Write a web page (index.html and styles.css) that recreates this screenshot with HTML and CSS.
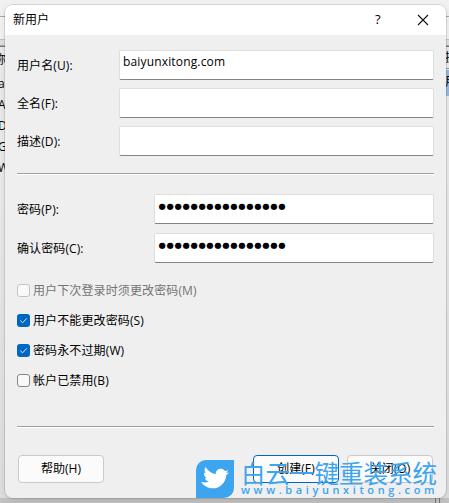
FILE: index.html
```html
<!DOCTYPE html>
<html lang="zh-CN">
<head>
<meta charset="utf-8">
<title>新用户</title>
<link rel="stylesheet" href="styles.css">
</head>
<body>
<div class="desktop">
  <div class="toolbar"></div>
  <div class="toolbar-edge"></div>
  <div class="panes">
    <div class="list"><div>称</div><div>ad</div><div>Ac</div><div>De</div><div>Gu</div><div>W</div></div>
    <div class="actions"><div class="actions-head">操</div><div class="actions-item">用</div></div>
  </div>
  <div class="pane-foot"><span></span></div>
</div>
<main class="dialog">
  <header class="titlebar">
    <h1>新用户</h1>
    <span class="help">?</span>
    <svg class="close" viewBox="0 0 12 12"><path d="M1 1l10 10M11 1L1 11"/></svg>
  </header>
  <form class="content">
    <section class="group">
      <div class="row"><label>用户名(U):</label><div class="field">baiyunxitong.com</div></div>
      <div class="row"><label>全名(F):</label><div class="field"></div></div>
      <div class="row"><label>描述(D):</label><div class="field"></div></div>
    </section>
    <div class="rule"></div>
    <section class="group passwords">
      <div class="row"><label>密码(P):</label><div class="field dots">●●●●●●●●●●●●●●●●</div></div>
      <div class="row"><label>确认密码(C):</label><div class="field dots">●●●●●●●●●●●●●●●●</div></div>
    </section>
    <section class="checks">
      <div class="check disabled"><i class="box"></i>用户下次登录时须更改密码(M)</div>
      <div class="check"><i class="box on"><svg viewBox="0 0 13 13"><path d="M3.3 6.6l2.3 2.2 4.2-4.4"/></svg></i>用户不能更改密码(S)</div>
      <div class="check"><i class="box on"><svg viewBox="0 0 13 13"><path d="M3.3 6.6l2.3 2.2 4.2-4.4"/></svg></i>密码永不过期(W)</div>
      <div class="check"><i class="box"></i>帐户已禁用(B)</div>
    </section>
    <div class="rule"></div>
    <footer class="buttons">
      <div class="button">帮助(H)</div>
      <div class="button primary">创建(E)</div>
      <div class="button">关闭(O)</div>
    </footer>
  </form>
</main>
<div class="watermark">
  <div class="logo"><svg viewBox="0 0 28 24"><path d="M.5 16.5c3 .8 5.600.3 7.600-1.300-2-.1-3.700-1.400-4.200-3.200h2.100C3.700 11.300 2.300 9.400 2.400 7.100l2 .5C2.500 6 2 3.400 3.200 1.300c3 3.600 6.500 5.500 10.900 6-.6-3.400 1.700-6.200 5-6.200 1.600 0 3 .7 3.900 1.800l3.200-1.100-1.900 2.700 2.900-.5-2.500 2.800C24.900 14.700 19.500 21.700 11 21.700 6.600 21.700 3.200 19.800.5 16.500z" transform="rotate(7 14 12)"/></svg></div>
  <div class="brand"><div class="name">白云一键重装系统</div><div class="url">www.baiyunxitong.com</div></div>
</div>
</body>
</html>
```
FILE: styles.css
```css
* { box-sizing: border-box; }
body {
  margin: 0;
  width: 449px;
  height: 503px;
  overflow: hidden;
  position: relative;
  background: linear-gradient(#ebebeb 180px, #dedede 100%);
  color: #000;
  font: 12px/16px "Open Sans", "Noto Sans CJK SC", sans-serif;
}
.desktop { height: 503px; display: flex; flex-direction: column; }
.toolbar { height: 17px; background: #f1f1f1; border-bottom: 1px solid #a8a8a8; }
.toolbar-edge { height: 30px; background: linear-gradient(#f3f3f3 22px, #c4c4c4 22px, #c4c4c4 23px, #e0e0e0 23px, #e0e0e0 28px, #777 29px); }
.panes { flex: 1; display: flex; justify-content: space-between; }
.list { width: 20px; padding-top: 4px; margin-left: -6px; line-height: 21px; overflow: hidden; white-space: nowrap; }
.list div { padding-left: 4px; }
.list div:first-child { padding-left: 0; height: 22px; line-height: 18px; }
.actions { width: 4px; overflow: hidden; }
.actions-head { height: 22px; padding-top: 3px; border-bottom: 1px solid #999; }
.actions-item { height: 26px; background: #9bbade; padding-top: 4px; margin-top: 1px; }
.pane-foot { height: 5px; background: #c3c3c3; display: flex; justify-content: flex-end; }
.pane-foot span { width: 5px; margin-right: 9px; border: solid #777; border-width: 0 1px; }

.dialog {
  position: absolute;
  left: 5px;
  top: 5px;
  width: 441px;
  height: 493px;
  border-radius: 8px;
  background: #efefef;
  overflow: hidden;
  box-shadow: 0 0 0 1px rgba(0,0,0,.1), 0 3px 8px rgba(0,0,0,.1);
}
.titlebar { height: 30px; background: #fff; display: flex; align-items: center; padding: 0 17px 0 8px; }
h1 { flex: 1; margin: 0; font-size: 12px; font-weight: 400; line-height: 16px; }
.help { width: 7px; margin: -2px 35px 0 0; font-size: 13px; font-weight: 500; }
.close { width: 12px; height: 12px; margin-top: -1px; fill: none; stroke: #111; stroke-width: 1.1; }
.content { padding: 15px 12px 0; }
.group { display: flex; flex-direction: column; gap: 8px; }
.row { display: flex; height: 30px; }
label { width: 102px; padding-top: 8px; white-space: nowrap; letter-spacing: .1px; }
.field {
  flex: 1;
  background: #fff;
  border: 1px solid #dedede;
  border-bottom-color: #858585;
  border-radius: 2px;
  padding: 3px;
  white-space: nowrap;
  letter-spacing: .16px;
}
.rule { height: 2px; margin-top: 17px; background: linear-gradient(#9f9f9f 1px, #fff 1px); }
.passwords { margin-top: 19px; gap: 9px; }
.passwords label { width: 137px; }
.dots { font: 8.4px/16px "DejaVu Sans", sans-serif; letter-spacing: .67px; padding-top: 3px; padding-left: 3.5px; }
.checks { margin-top: 19px; display: flex; flex-direction: column; gap: 14px; }
.check { display: flex; align-items: center; gap: 3px; height: 16px; white-space: nowrap; letter-spacing: .12px; padding-top: 1px; }
.box { width: 13px; height: 13px; margin-top: -1px; border: 1px solid #868686; border-radius: 3px; background: #f9f9f9; display: block; }
.box.on { border: 0; background: #0067c0; }
.box svg { display: block; fill: none; stroke: #dcecff; stroke-width: 1; }
.disabled { color: #737373; }
.disabled .box { border-color: #c3c3c3; }
.checks + .rule { margin-top: 38px; }
.buttons { margin-top: 27px; padding: 0 1px; display: flex; gap: 8px; }
.button {
  width: 86px;
  height: 28px;
  border: 1px solid #cacaca;
  border-radius: 4px;
  background: #fbfbfb;
  text-align: center;
  line-height: 26px;
}
.button.primary { margin-left: auto; border-color: #0067c0; }

.watermark { position: absolute; left: 196px; top: 460px; display: flex; gap: 7px; color: #3da4f0; }
.logo { width: 38px; height: 38px; border-radius: 10px 0 10px 0; background: #3da4f0; padding: 7px 5px; }
.logo svg { display: block; width: 28px; height: 24px; fill: #fff; }
.name { font: 400 24.5px/25px "Noto Sans CJK SC", sans-serif; white-space: nowrap; }
.url { font: 600 11px/10px "Open Sans", sans-serif; letter-spacing: 3.6px; white-space: nowrap; }
```
